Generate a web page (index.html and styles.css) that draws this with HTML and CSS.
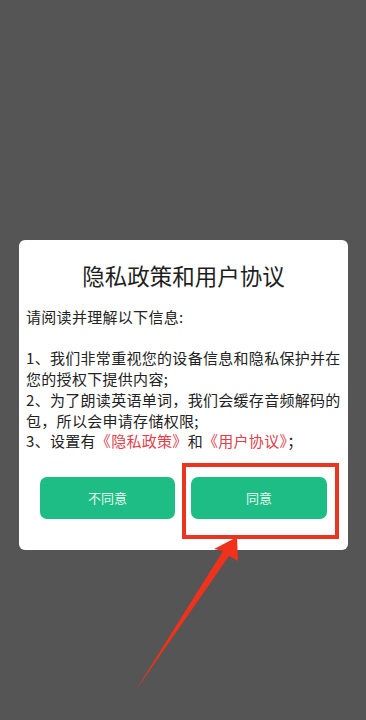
FILE: index.html
```html
<!DOCTYPE html>
<html lang="zh-CN">
<head>
    <meta charset="UTF-8">
    <meta name="viewport" content="width=device-width, initial-scale=1.0">
    <title>隐私政策和用户协议</title>
    <link rel="stylesheet" href="styles.css">
</head>
<body>
    <div class="dialog">
        <h1>隐私政策和用户协议</h1>
        <div class="content">
            <p>请阅读并理解以下信息:</p>
            <p class="gap">1、我们非常重视您的设备信息和隐私保护并在您的授权下提供内容;</p>
            <p>2、为了朗读英语单词，我们会缓存音频解码的包，所以会申请存储权限;</p>
            <p>3、设置有<span class="link">《隐私政策》</span>和<span class="link">《用户协议》</span>；</p>
        </div>
        <div class="actions">
            <button class="btn">不同意</button>
            <div class="mark-wrap">
                <button class="btn">同意</button>
                <span class="mark"></span>
            </div>
        </div>
    </div>

    <!-- annotation arrow -->
    <svg class="arrow" width="366" height="720" viewBox="0 0 366 720">
        <polygon points="237,537 214,549 223,551 134,693 229,556 238,561" fill="#f0321c"/>
    </svg>
</body>
</html>
```

FILE: styles.css
```css
body {
    margin: 0;
    padding: 240px 0 0 19px;
    background-color: #555555;
    font-family: "Noto Sans CJK SC", "Noto Sans", sans-serif;
    height: 720px;
    box-sizing: border-box;
    overflow: hidden;
}
.dialog {
    width: 329px;
    height: 310px;
    box-sizing: border-box;
    background-color: #fff;
    border-radius: 6px;
    padding: 20px 0 0 0;
}
h1 {
    margin: 0;
    font-size: 22.5px;
    font-weight: normal;
    line-height: 30px;
    text-align: center;
    color: #1e1e1e;
}
.content {
    margin-top: 17px;
    padding: 0 6px 0 7px;
    font-size: 15px;
    letter-spacing: 0.3px;
    line-height: 20.7px;
    color: #222;
}
.content p {
    margin: 0;
}
.content .gap {
    margin-top: 20.7px;
}
.link {
    color: #e0404c;
}
.actions {
    display: flex;
    gap: 16px;
    padding: 0 20px 0 21px;
    margin-top: 25px;
}
.btn {
    width: 135px;
    height: 42px;
    border: none;
    border-radius: 7px;
    background-color: #1ebd86;
    color: #e6f7ef;
    font-family: inherit;
    font-size: 13px;
    padding: 0;
}
.mark-wrap {
    position: relative;
}
.mark-wrap .btn {
    width: 136px;
}
.mark {
    position: absolute;
    top: -14px;
    left: -9px;
    right: -12px;
    bottom: -20px;
    border: 4px solid #eb3420;
}
.arrow {
    position: absolute;
    left: 0;
    top: 0;
}
```
